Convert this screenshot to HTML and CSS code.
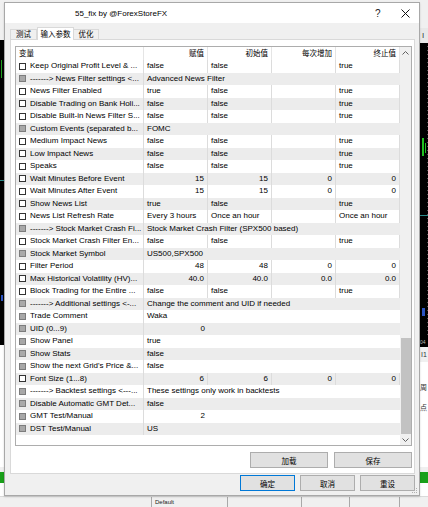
FILE: index.html
```html
<!DOCTYPE html>
<html lang="zh">
<head>
  <meta charset="UTF-8">
  <title>55_fix by @ForexStoreFX</title>
  <link rel="stylesheet" href="styles.css">
</head>
<body>
  <div class="screen">
    <div class="desk">
      <div class="term term-left">
        <div class="t-light" style="height:40px"></div>
        <div class="t-chart" style="height:295px"></div>
        <div class="t-dark" style="height:10px"></div>
        <div class="t-white" style="height:122px"></div>
        <div class="t-green"></div>
        <div class="t-white" style="flex:1"></div>
      </div>

      <div class="dialog">
        <div class="titlebar">
          <span class="title">55_fix by @ForexStoreFX</span>
          <span class="help">?</span>
          <svg class="close" width="9" height="9" viewBox="0 0 9 9">
            <path d="M0.5 0.5L8.5 8.5M8.5 0.5L0.5 8.5" stroke="#111" stroke-width="1"/>
          </svg>
        </div>

        <div class="tabs">
          <div class="tab">测试</div>
          <div class="tab active">输入参数</div>
          <div class="tab">优化</div>
        </div>

        <div class="panel">
          <div class="list">
            <div class="list-main">
              <div class="head">
                <span class="h first">变量</span>
                <span class="h">赋值</span>
                <span class="h">初始值</span>
                <span class="h">每次增加</span>
                <span class="h">终止值</span>
              </div>
              <div class="rows">
                <div class="row"><span class="c name"><i class="cb"></i>Keep Original Profit Level &amp; ...</span><span class="c">false</span><span class="c">false</span><span class="c"></span><span class="c">true</span></div>
                <div class="row fixed"><span class="c name"><i class="cb off"></i>-------&gt; News Filter settings &lt;...</span><span class="c wide">Advanced News Filter</span></div>
                <div class="row"><span class="c name"><i class="cb"></i>News Filter Enabled</span><span class="c">true</span><span class="c">false</span><span class="c"></span><span class="c">true</span></div>
                <div class="row"><span class="c name"><i class="cb"></i>Disable Trading on Bank Holi...</span><span class="c">false</span><span class="c">false</span><span class="c"></span><span class="c">true</span></div>
                <div class="row"><span class="c name"><i class="cb"></i>Disable Built-in News Filter S...</span><span class="c">false</span><span class="c">false</span><span class="c"></span><span class="c">true</span></div>
                <div class="row fixed"><span class="c name"><i class="cb off"></i>Custom Events (separated b...</span><span class="c wide">FOMC</span></div>
                <div class="row"><span class="c name"><i class="cb"></i>Medium Impact News</span><span class="c">false</span><span class="c">false</span><span class="c"></span><span class="c">true</span></div>
                <div class="row"><span class="c name"><i class="cb"></i>Low Impact News</span><span class="c">false</span><span class="c">false</span><span class="c"></span><span class="c">true</span></div>
                <div class="row"><span class="c name"><i class="cb"></i>Speaks</span><span class="c">false</span><span class="c">false</span><span class="c"></span><span class="c">true</span></div>
                <div class="row"><span class="c name"><i class="cb"></i>Wait Minutes Before Event</span><span class="c num">15</span><span class="c num">15</span><span class="c num">0</span><span class="c num">0</span></div>
                <div class="row"><span class="c name"><i class="cb"></i>Wait Minutes After Event</span><span class="c num">15</span><span class="c num">15</span><span class="c num">0</span><span class="c num">0</span></div>
                <div class="row"><span class="c name"><i class="cb"></i>Show News List</span><span class="c">true</span><span class="c">false</span><span class="c"></span><span class="c">true</span></div>
                <div class="row"><span class="c name"><i class="cb"></i>News List Refresh Rate</span><span class="c">Every 3 hours</span><span class="c">Once an hour</span><span class="c"></span><span class="c">Once an hour</span></div>
                <div class="row fixed"><span class="c name"><i class="cb off"></i>-------&gt; Stock Market Crash Fi...</span><span class="c wide">Stock Market Crash Filter (SPX500 based)</span></div>
                <div class="row"><span class="c name"><i class="cb"></i>Stock Market Crash Filter En...</span><span class="c">false</span><span class="c">false</span><span class="c"></span><span class="c">true</span></div>
                <div class="row fixed"><span class="c name"><i class="cb off"></i>Stock Market Symbol</span><span class="c wide">US500,SPX500</span></div>
                <div class="row"><span class="c name"><i class="cb"></i>Filter Period</span><span class="c num">48</span><span class="c num">48</span><span class="c num">0</span><span class="c num">0</span></div>
                <div class="row"><span class="c name"><i class="cb"></i>Max Historical Volatility (HV)...</span><span class="c num">40.0</span><span class="c num">40.0</span><span class="c num">0.0</span><span class="c num">0.0</span></div>
                <div class="row"><span class="c name"><i class="cb"></i>Block Trading for the Entire ...</span><span class="c">false</span><span class="c">false</span><span class="c"></span><span class="c">true</span></div>
                <div class="row fixed"><span class="c name"><i class="cb off"></i>-------&gt; Additional settings &lt;-...</span><span class="c wide">Change the comment and UID if needed</span></div>
                <div class="row fixed"><span class="c name"><i class="cb off"></i>Trade Comment</span><span class="c wide">Waka</span></div>
                <div class="row fixed"><span class="c name"><i class="cb off"></i>UID (0...9)</span><span class="c wide"><span class="num-in">0</span></span></div>
                <div class="row fixed"><span class="c name"><i class="cb off"></i>Show Panel</span><span class="c wide">true</span></div>
                <div class="row fixed"><span class="c name"><i class="cb off"></i>Show Stats</span><span class="c wide">false</span></div>
                <div class="row fixed"><span class="c name"><i class="cb off"></i>Show the next Grid's Price &amp;...</span><span class="c wide">false</span></div>
                <div class="row"><span class="c name"><i class="cb"></i>Font Size (1...8)</span><span class="c num">6</span><span class="c num">6</span><span class="c num">0</span><span class="c num">0</span></div>
                <div class="row fixed"><span class="c name"><i class="cb off"></i>-------&gt; Backtest settings &lt;---...</span><span class="c wide">These settings only work in backtests</span></div>
                <div class="row fixed"><span class="c name"><i class="cb off"></i>Disable Automatic GMT Det...</span><span class="c wide">false</span></div>
                <div class="row fixed"><span class="c name"><i class="cb off"></i>GMT Test/Manual</span><span class="c wide"><span class="num-in">2</span></span></div>
                <div class="row fixed"><span class="c name"><i class="cb off"></i>DST Test/Manual</span><span class="c wide">US</span></div>
              </div>
            </div>
            <div class="vscroll">
              <div class="arrow">
                <svg width="7" height="4" viewBox="0 0 7 4"><path d="M0.5 3.5L3.5 0.5L6.5 3.5" fill="none" stroke="#606060"/></svg>
              </div>
              <div class="track"></div>
              <div class="thumb"></div>
              <div class="arrow">
                <svg width="7" height="4" viewBox="0 0 7 4"><path d="M0.5 0.5L3.5 3.5L6.5 0.5" fill="none" stroke="#606060"/></svg>
              </div>
            </div>
          </div>
          <div class="panel-buttons">
            <button class="btn wide-btn">加载</button>
            <button class="btn wide-btn">保存</button>
          </div>
        </div>

        <div class="dialog-buttons">
          <button class="btn default">确定</button>
          <button class="btn">取消</button>
          <button class="btn">重设</button>
        </div>
        <svg class="grip" width="6" height="6" viewBox="0 0 6 6">
          <rect x="4" y="0" width="1" height="1" fill="#b0b0b0"/>
          <rect x="2" y="2" width="1" height="1" fill="#b0b0b0"/>
          <rect x="4" y="2" width="1" height="1" fill="#b0b0b0"/>
          <rect x="0" y="4" width="1" height="1" fill="#b0b0b0"/>
          <rect x="2" y="4" width="1" height="1" fill="#b0b0b0"/>
          <rect x="4" y="4" width="1" height="1" fill="#b0b0b0"/>
        </svg>
      </div>

      <div class="term term-right">
        <div class="t-light" style="height:28px"></div>
        <div class="t-tool" style="height:15px">I</div>
        <div class="t-chart right" style="height:294px"></div>
        <div class="t-dark label" style="height:10px">04</div>
        <div class="t-light label" style="height:15px">I1</div>
        <div class="t-white cjk" style="height:105px"><span>周</span><span>点</span></div>
        <div class="t-green"></div>
        <div class="t-white" style="flex:1"></div>
      </div>
    </div>

    <div class="statusbar">
      <span class="sb" style="width:152px"></span>
      <span class="sb" style="width:76px">Default</span>
      <span class="sb" style="width:74px"></span>
      <span class="sb" style="width:48px"></span>
      <span class="sb" style="width:50px"></span>
      <span class="sb last"></span>
    </div>
  </div>
</body>
</html>
```

FILE: styles.css
```css
* {
  box-sizing: border-box;
}

body {
  margin: 0;
  width: 428px;
  height: 507px;
  overflow: hidden;
  background: #f0f0f0;
  font-family: "Liberation Sans", "Noto Sans CJK SC", sans-serif;
  font-size: 8px;
  color: #000;
}

.screen {
  display: flex;
  flex-direction: column;
  height: 507px;
}

.desk {
  display: flex;
  height: 496px;
}

/* terminal behind the dialog */
.term {
  display: flex;
  flex-direction: column;
  overflow: hidden;
}

.term-left {
  width: 4px;
}

.term-right {
  width: 8px;
}

.t-light {
  background: #f0f0f0;
}

.t-white {
  background: #fff;
}

.t-tool {
  background: #e8e8e8;
  color: #333;
  font-size: 8px;
  line-height: 15px;
  padding-left: 2px;
}

.t-chart {
  background:
    linear-gradient(#1ea01e, #1ea01e) 1px 20px / 1px 18px no-repeat,
    linear-gradient(#2a8a8a, #2a8a8a) 0 140px / 4px 1px no-repeat,
    linear-gradient(#2a52c0, #2a52c0) 1px 255px / 2px 6px no-repeat,
    #000;
}

.t-chart.right {
  background:
    linear-gradient(#20c020, #20c020) 2px 95px / 2px 18px no-repeat,
    linear-gradient(#20c020, #20c020) 5px 100px / 1px 10px no-repeat,
    linear-gradient(#2a8a8a, #2a8a8a) 0 172px / 8px 1px no-repeat,
    linear-gradient(#2a52c0, #2a52c0) 2px 265px / 3px 8px no-repeat,
    repeating-linear-gradient(#000 0 3px, #555 3px 4px) 7px 0 / 1px 100% no-repeat,
    #000;
}

.t-dark {
  background: #000;
}

.label {
  color: #bbb;
  font-size: 5px;
  line-height: 10px;
}

.t-light.label {
  color: #333;
  font-size: 7px;
  line-height: 15px;
  padding-left: 1px;
}

.cjk {
  display: flex;
  flex-direction: column;
  gap: 10px;
  padding-top: 20px;
  font-size: 7px;
  color: #333;
}

.t-green {
  height: 11px;
  margin-top: 5px;
  background: #1aa01a;
}

/* dialog */
.dialog {
  position: relative;
  width: 416px;
  margin-top: 2px;
  border: 1px solid #a8a8a8;
  background: #f0f0f0;
  display: flex;
  flex-direction: column;
  box-shadow: 0 1px 2px rgba(0, 0, 0, 0.15);
}

.titlebar {
  height: 20px;
  background: #fff;
  display: flex;
  align-items: center;
  padding-left: 70px;
}

.title {
  flex: 1;
  font-size: 8px;
}

.help {
  font-size: 10px;
  width: 8px;
  margin-right: 18px;
  color: #222;
}

.close {
  margin-right: 9px;
}

.tabs {
  display: flex;
  align-items: flex-end;
  height: 16px;
  padding-left: 5px;
  position: relative;
  z-index: 1;
}

.tab {
  height: 10px;
  line-height: 9px;
  padding: 0;
  text-align: center;
  white-space: nowrap;
  border: 1px solid #d9d9d9;
  border-bottom: none;
  background: #f0f0f0;
  font-size: 7.5px;
}

.tab:first-child {
  width: 27px;
}

.tab.active {
  height: 13px;
  line-height: 11px;
  width: 37px;
  background: #fff;
  margin-bottom: -1px;
  padding-top: 1px;
}

.tab:last-child {
  width: 25px;
  border-left: none;
}

.panel {
  margin: 0 4px 0 5px;
  height: 435px;
  background: #fff;
  border: 1px solid #d9d9d9;
  padding: 6px 2px 4px 4px;
  display: flex;
  flex-direction: column;
}

/* parameter list */
.list {
  height: 400px;
  border: 1px solid #adadad;
  display: flex;
}

.list-main {
  width: 384px;
  overflow: hidden;
}

.head {
  display: grid;
  grid-template-columns: 128px 64px 64px 64px 64px;
  height: 13px;
}

.h {
  border-right: 1px solid #e5e5e5;
  text-align: right;
  padding-right: 3px;
  line-height: 13px;
  font-size: 7.5px;
}

.h.first {
  text-align: left;
  padding-left: 3px;
}

.row {
  display: grid;
  grid-template-columns: 128px 64px 64px 64px 64px;
  height: 12.5px;
  line-height: 12.5px;
}

.row:nth-child(even) {
  background: #ececec;
}

.row.fixed {
  grid-template-columns: 128px 256px;
}

.c {
  border-right: 1px solid #dcdcdc;
  padding-left: 3px;
  white-space: nowrap;
  overflow: hidden;
}

.c.num {
  text-align: right;
  padding: 0 3px 0 0;
}

.c.wide {
  border-right: none;
}

.num-in {
  display: inline-block;
  width: 58px;
  text-align: right;
}

.c.name {
  display: flex;
  align-items: center;
}

.cb {
  width: 7px;
  height: 7px;
  border: 1px solid #333;
  background: #fff;
  margin-right: 4px;
  flex-shrink: 0;
}

.cb.off {
  border-color: #7c7c7c;
  background: #a8a8a8;
}

.vscroll {
  width: 11px;
  background: #f0f0f0;
  display: flex;
  flex-direction: column;
}

.arrow {
  height: 11px;
  display: flex;
  align-items: center;
  justify-content: center;
}

.track {
  flex: 1;
}

.thumb {
  height: 96px;
  margin: 0 0 0 1px;
  background: #c2c2c2;
}

/* buttons */
.btn {
  height: 16px;
  border: 1px solid #adadad;
  background: #e1e1e1;
  font-family: "Noto Sans CJK SC", sans-serif;
  font-size: 7.5px;
  padding: 0;
  color: #000;
}

.panel-buttons {
  display: flex;
  justify-content: flex-end;
  gap: 6px;
  margin-top: 6px;
}

.wide-btn {
  width: 78px;
}

.dialog-buttons {
  display: flex;
  justify-content: flex-end;
  gap: 5px;
  margin: 1px 4px 0 0;
}

.dialog-buttons .btn {
  width: 55px;
}

.btn.default {
  border-color: #0078d7;
}

.grip {
  position: absolute;
  right: 1px;
  bottom: 1px;
}

/* status bar */
.statusbar {
  flex: 1;
  display: flex;
  background: #f0f0f0;
  border-top: 1px solid #dadada;
  overflow: hidden;
}

.sb {
  border-right: 1px solid #a9a9a9;
  padding: 2px 0 0 3px;
  font-size: 6px;
  line-height: 7px;
  color: #222;
}

.sb.last {
  flex: 1;
  border-right: none;
}
```
